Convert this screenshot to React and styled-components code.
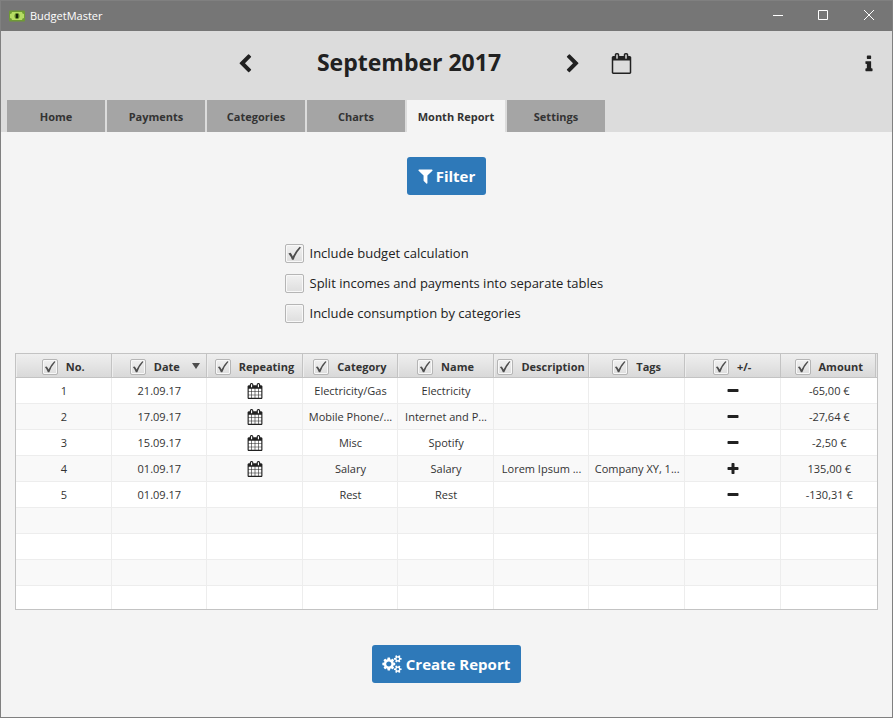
import React, { useState } from "react";
import styled, { createGlobalStyle } from "styled-components";

const GlobalStyle = createGlobalStyle`
  *, *::before, *::after { box-sizing: border-box; }
  body {
    margin: 0;
    background: #f4f4f4;
    color: #212121;
    font: 11px/16px "Open Sans", "Noto Sans", sans-serif;
  }
  button { font: inherit; color: inherit; border: 0; padding: 0; background: none; }
`;

const CALENDAR_FRAME =
  "v-288q0-13-9.500-22.500t-22.500-9.500h-64q-13 0-22.500 9.500t-9.500 22.500v288q0 13 9.500 22.500t22.500 9.500h64q13 0 22.500-9.500t9.500-22.500z";
const CALENDAR_OUTER =
  "v1280q0 52-38 90t-90 38h-1408q-52 0-90-38t-38-90v-1280q0-52 38-90t90-38h128v-96q0-66 47-113t113-47h64q66 0 113 47t47 113v96h384v-96q0-66 47-113t113-47h64q66 0 113 47t47 113v96h128q52 0 90 38t38 90z";
const SMALL_COG =
  "v140q0 16-149 31-12 27-30 52 51 113 51 138 0 4-4 7-122 71-124 71-8 0-46-47t-52-68q-20 2-30 2t-30-2q-14 21-52 68t-46 47q-2 0-124-71-4-3-4-7 0-25 51-138-18-25-30-52-149-15-149-31v-140q0-16 149-31 13-29 30-52-51-113-51-138 0-4 4-7 4-2 35-20t59-34 30-16q8 0 46 46.500t52 67.500q20-2 30-2t30 2q51-71 92-112l6-2q4 0 124 70 4 3 4 7 0 25-51 138 17 23 30 52 149 15 149 31z";

const PATHS = {
  left: "M1427 301l-531 531 531 531q19 19 19 45t-19 45l-166 166q-19 19-45 19t-45-19l-742-742q-19-19-19-45t19-45l742-742q19-19 45-19t45 19l166 166q19 19 19 45t-19 45z",
  right: "M1363 877l-742 742q-19 19-45 19t-45-19l-166-166q-19-19-19-45t19-45l531-531-531-531q-19-19-19-45t19-45l166-166q19-19 45-19t45 19l742 742q19 19 19 45t-19 45z",
  info: "M1216 1344v128q0 26-19 45t-45 19h-512q-26 0-45-19t-19-45v-128q0-26 19-45t45-19h64v-384h-64q-26 0-45-19t-19-45v-128q0-26 19-45t45-19h384q26 0 45 19t19 45v576h64q26 0 45 19t19 45zm-128-1152v192q0 26-19 45t-45 19h-256q-26 0-45-19t-19-45v-192q0-26 19-45t45-19h256q26 0 45 19t19 45z",
  filter: "M1595 295q17 41-14 70l-493 493v742q0 42-39 59-13 5-25 5-27 0-45-19l-256-256q-19-19-19-45v-486l-493-493q-31-29-14-70 17-39 59-39h1280q42 0 59 39z",
  minus: "M1600 736v192q0 40-28 68t-68 28h-1216q-40 0-68-28t-28-68v-192q0-40 28-68t68-28h1216q40 0 68 28t28 68z",
  plus: "M1600 736v192q0 40-28 68t-68 28h-416v416q0 40-28 68t-68 28h-192q-40 0-68-28t-28-68v-416h-416q-40 0-68-28t-28-68v-192q0-40 28-68t68-28h416v-416q0-40 28-68t68-28h192q40 0 68 28t28 68v416h416q40 0 68 28t28 68z",
  calendarOpen: `M192 1664h1408v-1024h-1408v1024zM576 448${CALENDAR_FRAME}M1344 448${CALENDAR_FRAME}M1728 384${CALENDAR_OUTER}`,
  calendar: `M192 1664h288v-288h-288v288zm352 0h320v-288h-320v288zm-352-352h288v-320h-288v320zm352 0h320v-320h-320v320zm-352-384h288v-288h-288v288zm736 736h320v-288h-320v288zm-384-736h320v-288h-320v288zm768 736h288v-288h-288v288zm-384-352h320v-320h-320v320zm384 0h288v-320h-288v320zm-384-384h320v-288h-320v288zm384 0h288v-288h-288v288zM576 448${CALENDAR_FRAME}M1344 448${CALENDAR_FRAME}M1728 384${CALENDAR_OUTER}`,
  cogs: `M832 896q0-106-75-181t-181-75-181 75-75 181 75 181 181 75 181-75 75-181zm768 512q0-52-38-90t-90-38-90 38-38 90q0 53 37.500 90.500t90.500 37.500 90.500-37.500 37.500-90.500zm0-1024q0-52-38-90t-90-38-90 38-38 90q0 53 37.500 90.500t90.500 37.500 90.500-37.500 37.500-90.500zm-384 421v185q0 10-7 19.500t-16 10.500l-155 24q-11 35-32 76 34 48 90 115 7 11 7 20 0 12-7 19-23 30-82.500 89.500t-78.500 59.500q-11 0-21-7l-115-90q-37 19-77 31-11 108-23 155-7 24-30 24h-186q-11 0-20-7.500t-10-17.500l-23-153q-34-10-75-31l-118 89q-7 7-20 7-11 0-21-8-144-133-144-160 0-9 7-19 10-14 41-53t47-61q-23-44-35-82l-152-24q-10-1-17-9.500t-7-19.500v-185q0-10 7-19.500t16-10.500l155-24q11-35 32-76-34-48-90-115-7-11-7-20 0-12 7-20 22-30 82-89t79-59q11 0 21 7l115 90q34-18 77-32 11-108 23-154 7-24 30-24h186q11 0 20 7.500t10 17.500l23 153q34 10 75 31l118-89q8-7 20-7 11 0 21 8 144 133 144 160 0 8-7 19-12 16-42 54t-45 60q23 48 34 82l152 23q10 2 17 10.500t7 19.500zM1856 1338${SMALL_COG}M1856 314${SMALL_COG}`,
};

const Glyph = styled.svg`
  display: block;
  flex: none;
  width: ${(p) => p.$width}px;
  height: ${(p) => p.$height}px;
  fill: currentColor;
  overflow: visible;
`;

function Icon({ name, size, width = size, box = "0 0 1792 1792" }) {
  return (
    <Glyph $width={width} $height={size} viewBox={box} aria-hidden="true">
      <path d={PATHS[name]} />
    </Glyph>
  );
}

const Window = styled.div`
  display: flex;
  flex-direction: column;
  height: 100vh;
  min-height: 480px;
  border: 1px solid #808080;
  background: #f4f4f4;
`;

const TitleBar = styled.header`
  display: flex;
  align-items: center;
  height: 30px;
  padding-left: 8px;
  gap: 5px;
  background: #767676;
  color: #fff;
`;

const AppName = styled.span`
  flex: 1;
`;

const Logo = styled.svg`
  width: 16px;
  height: 12px;
`;

const WindowControls = styled.div`
  display: flex;
`;

const WindowButton = styled.button`
  display: grid;
  place-items: center;
  width: 46px;
  height: 30px;

  svg {
    width: 12px;
    height: 12px;
    fill: none;
    stroke: #fff;
  }
`;

const MonthBar = styled.div`
  display: grid;
  grid-template-columns: 1fr auto 1fr auto;
  align-items: center;
  height: 69px;
  padding: 0 17px 4px 2px;
  background: #dcdcdc;
`;

const MonthPicker = styled.div`
  grid-column: 2;
  display: flex;
  align-items: center;
`;

const Month = styled.h1`
  width: 308px;
  margin: 0;
  padding-bottom: 4px;
  font-size: 23px;
  line-height: 32px;
  font-weight: 700;
  text-align: center;
`;

const IconButton = styled.button`
  display: grid;
  place-items: center;
  width: ${(p) => p.$width}px;
  height: 24px;
  margin-left: ${(p) => p.$gap || 0}px;
`;

const InfoSlot = styled.div`
  grid-column: 4;
`;

const Tabs = styled.nav`
  display: flex;
  gap: 2px;
  padding-left: 6px;
  background: #dcdcdc;
`;

const Tab = styled.button`
  width: 98px;
  height: 32px;
  padding-top: 1px;
  font-weight: 700;
  color: #333;
  background: ${(p) => (p.$active ? "#f4f4f4" : "#a5a5a5")};
`;

const Page = styled.main`
  flex: 1;
  min-height: 0;
  display: flex;
  flex-direction: column;
  align-items: center;
  padding: 25px 14px 34px;
`;

const ActionButton = styled.button`
  display: flex;
  flex: none;
  align-items: center;
  gap: 3px;
  height: 38px;
  padding: 0 11px 1px;
  border-radius: 3px;
  background: #2e79b9;
  color: #fff;
  font-size: 15px;
  line-height: 24px;
  font-weight: 700;
`;

const Options = styled.div`
  display: flex;
  flex-direction: column;
  gap: 10px;
  min-width: 324px;
  margin: 48px 0 30px;
`;

const Option = styled.label`
  display: flex;
  align-items: center;
  gap: 6px;
  font-size: 13px;
  line-height: 20px;
`;

const TickFrame = styled.span`
  display: grid;
  flex: none;
  width: ${(p) => p.$size}px;
  height: ${(p) => p.$size}px;

  > * {
    grid-area: 1 / 1;
    width: 100%;
    height: 100%;
  }

  svg {
    fill: #4d4d4d;
    pointer-events: none;
    visibility: hidden;
  }

  input:checked + svg {
    visibility: visible;
  }
`;

const TickInput = styled.input`
  appearance: none;
  margin: 0;
  border: 1px solid #b5b5b5;
  border-radius: 2px;
  background: linear-gradient(#f1f1f1, #dedede);
  box-shadow: inset 0 0 0 1px #f8f8f8;
`;

function Tick({ size, defaultChecked, id, label }) {
  return (
    <TickFrame $size={size}>
      <TickInput type="checkbox" id={id} aria-label={label} defaultChecked={defaultChecked} />
      <svg viewBox="0 0 19 19" aria-hidden="true">
        <path d="M3.400 9.600L5.600 8.800Q7 10.500 7.800 12.600Q10 7.500 14.600 2.800L16 3.400Q11 9 8.700 15.700L7 15.700Q5.600 12 3.400 9.600Z" />
      </svg>
    </TickFrame>
  );
}

const TablePanel = styled.div`
  flex: 1;
  align-self: stretch;
  min-height: 0;
  margin-bottom: 35px;
  border: 1px solid #c3c3c3;
  background: #fff;
  overflow: hidden;
`;

const Table = styled.table`
  width: 100%;
  table-layout: fixed;
  border-collapse: separate;
  border-spacing: 0;
`;

const HeadCell = styled.th`
  width: ${(p) => (p.$last ? "auto" : "11.1%")};
  height: 24px;
  padding: 0;
  border-right: ${(p) => (p.$last ? 0 : "1px solid #c3c3c3")};
  border-bottom: 1px solid #c3c3c3;
  background: linear-gradient(#efefef, #d9d9d9);
  box-shadow: ${(p) => (p.$last ? "inset -1px 0 #e6e6e6, inset -2px 0 #c3c3c3" : "inset 1px 0 #eee")};
  color: #333;
  font-weight: 700;
  white-space: nowrap;
`;

const HeadContent = styled.div`
  display: flex;
  align-items: center;
  justify-content: center;
  gap: 8px;
  padding-top: 3px;
  height: 23px;
`;

const SortArrow = styled.svg`
  width: 8px;
  height: 6px;
  margin: 0 -12px 2px 4px;
  fill: #4d4d4d;
`;

const Row = styled.tr`
  background: ${(p) => (p.$odd ? "#f9f9f9" : "#fff")};
`;

const Cell = styled.td`
  height: 26px;
  padding: 0 0 0 1px;
  border-right: 1px solid #ededed;
  border-bottom: 1px solid #ededed;
  color: #333;
  text-align: center;
  white-space: nowrap;

  &:last-child { border-right: 0; }

  svg { margin: 0 auto; color: #212121; }
`;

const TABS = ["Home", "Payments", "Categories", "Charts", "Month Report", "Settings"];
const COLUMNS = ["No.", "Date", "Repeating", "Category", "Name", "Description", "Tags", "+/-", "Amount"];
const OPTIONS = [
  { id: "budget", label: "Include budget calculation", checked: true },
  { id: "split", label: "Split incomes and payments into separate tables", checked: false },
  { id: "consumption", label: "Include consumption by categories", checked: false },
];
const ROWS = [
  { date: "21.09.17", repeating: true, category: "Electricity/Gas", name: "Electricity", amount: "-65,00 €" },
  { date: "17.09.17", repeating: true, category: "Mobile Phone/...", name: "Internet and P...", amount: "-27,64 €" },
  { date: "15.09.17", repeating: true, category: "Misc", name: "Spotify", amount: "-2,50 €" },
  { date: "01.09.17", repeating: true, category: "Salary", name: "Salary", description: "Lorem Ipsum ...", tags: "Company XY, 1...", amount: "135,00 €" },
  { date: "01.09.17", repeating: false, category: "Rest", name: "Rest", amount: "-130,31 €" },
];
const EMPTY_ROWS = [5, 6, 7, 8];

export default function App() {
  const [tab, setTab] = useState("Month Report");

  return (
    <Window>
      <GlobalStyle />
      <TitleBar>
        <Logo viewBox="0 0 16 12" aria-hidden="true">
          <rect y="0.500" width="16" height="11" rx="1" fill="#6f9a35" />
          <path d="M3 2h10q0 2 2 2v4q-2 0-2 2H3q0-2-2-2V4q2 0 2-2z" fill="#b5dc62" />
          <ellipse cx="8" cy="6" rx="2.500" ry="3" fill="#5b8028" />
          <path d="M7 4h2v4H7z" fill="#16240a" />
        </Logo>
        <AppName>BudgetMaster</AppName>
        <WindowControls>
          <WindowButton aria-label="Minimize">
            <svg viewBox="0 0 12 12"><path d="M2 5.500h10" /></svg>
          </WindowButton>
          <WindowButton aria-label="Maximize">
            <svg viewBox="0 0 12 12"><path d="M1.500 0.500h9v9h-9z" /></svg>
          </WindowButton>
          <WindowButton aria-label="Close">
            <svg viewBox="0 0 12 12"><path d="M1 0l10 10M11 0L1 10" /></svg>
          </WindowButton>
        </WindowControls>
      </TitleBar>

      <MonthBar>
        <MonthPicker>
          <IconButton $width={20} aria-label="Previous month"><Icon name="left" size={20} /></IconButton>
          <Month>September 2017</Month>
          <IconButton $width={20} aria-label="Next month"><Icon name="right" size={20} /></IconButton>
          <IconButton $width={20} $gap={28} aria-label="Current month"><Icon name="calendarOpen" size={21} /></IconButton>
        </MonthPicker>
        <InfoSlot>
          <IconButton $width={12} aria-label="About">
            <Icon name="info" size={20} width={12} box="360 0 1075 1792" />
          </IconButton>
        </InfoSlot>
      </MonthBar>

      <Tabs>
        {TABS.map((name) => (
          <Tab key={name} $active={name === tab} onClick={() => setTab(name)}>{name}</Tab>
        ))}
      </Tabs>

      <Page>
        <ActionButton>
          <Icon name="filter" size={18} width={15} box="150 0 1493 1792" />
          Filter
        </ActionButton>

        <Options>
          {OPTIONS.map((o) => (
            <Option key={o.id} htmlFor={o.id}>
              <Tick id={o.id} size={19} defaultChecked={o.checked} />
              {o.label}
            </Option>
          ))}
        </Options>

        <TablePanel>
          <Table>
            <thead>
              <tr>
                {COLUMNS.map((name, i) => (
                  <HeadCell key={name} scope="col" $last={i === COLUMNS.length - 1}>
                    <HeadContent>
                      <Tick size={16} label={`Include ${name}`} defaultChecked />
                      {name}
                      {name === "Date" && (
                        <SortArrow viewBox="0 0 8 6" aria-hidden="true"><path d="M0 0h8L4 6z" /></SortArrow>
                      )}
                    </HeadContent>
                  </HeadCell>
                ))}
              </tr>
            </thead>
            <tbody>
              {ROWS.map((r, i) => (
                <Row key={i} $odd={i % 2 === 1}>
                  <Cell>{i + 1}</Cell>
                  <Cell>{r.date}</Cell>
                  <Cell>{r.repeating && <Icon name="calendar" size={16} />}</Cell>
                  <Cell>{r.category}</Cell>
                  <Cell>{r.name}</Cell>
                  <Cell>{r.description}</Cell>
                  <Cell>{r.tags}</Cell>
                  <Cell><Icon name={r.amount.startsWith("-") ? "minus" : "plus"} size={14} /></Cell>
                  <Cell>{r.amount}</Cell>
                </Row>
              ))}
              {EMPTY_ROWS.map((i) => (
                <Row key={i} $odd={i % 2 === 1}>
                  {COLUMNS.map((name) => <Cell key={name} />)}
                </Row>
              ))}
            </tbody>
          </Table>
        </TablePanel>

        <ActionButton>
          <Icon name="cogs" size={18} width={20} box="0 0 1991 1792" />
          Create Report
        </ActionButton>
      </Page>
    </Window>
  );
}
